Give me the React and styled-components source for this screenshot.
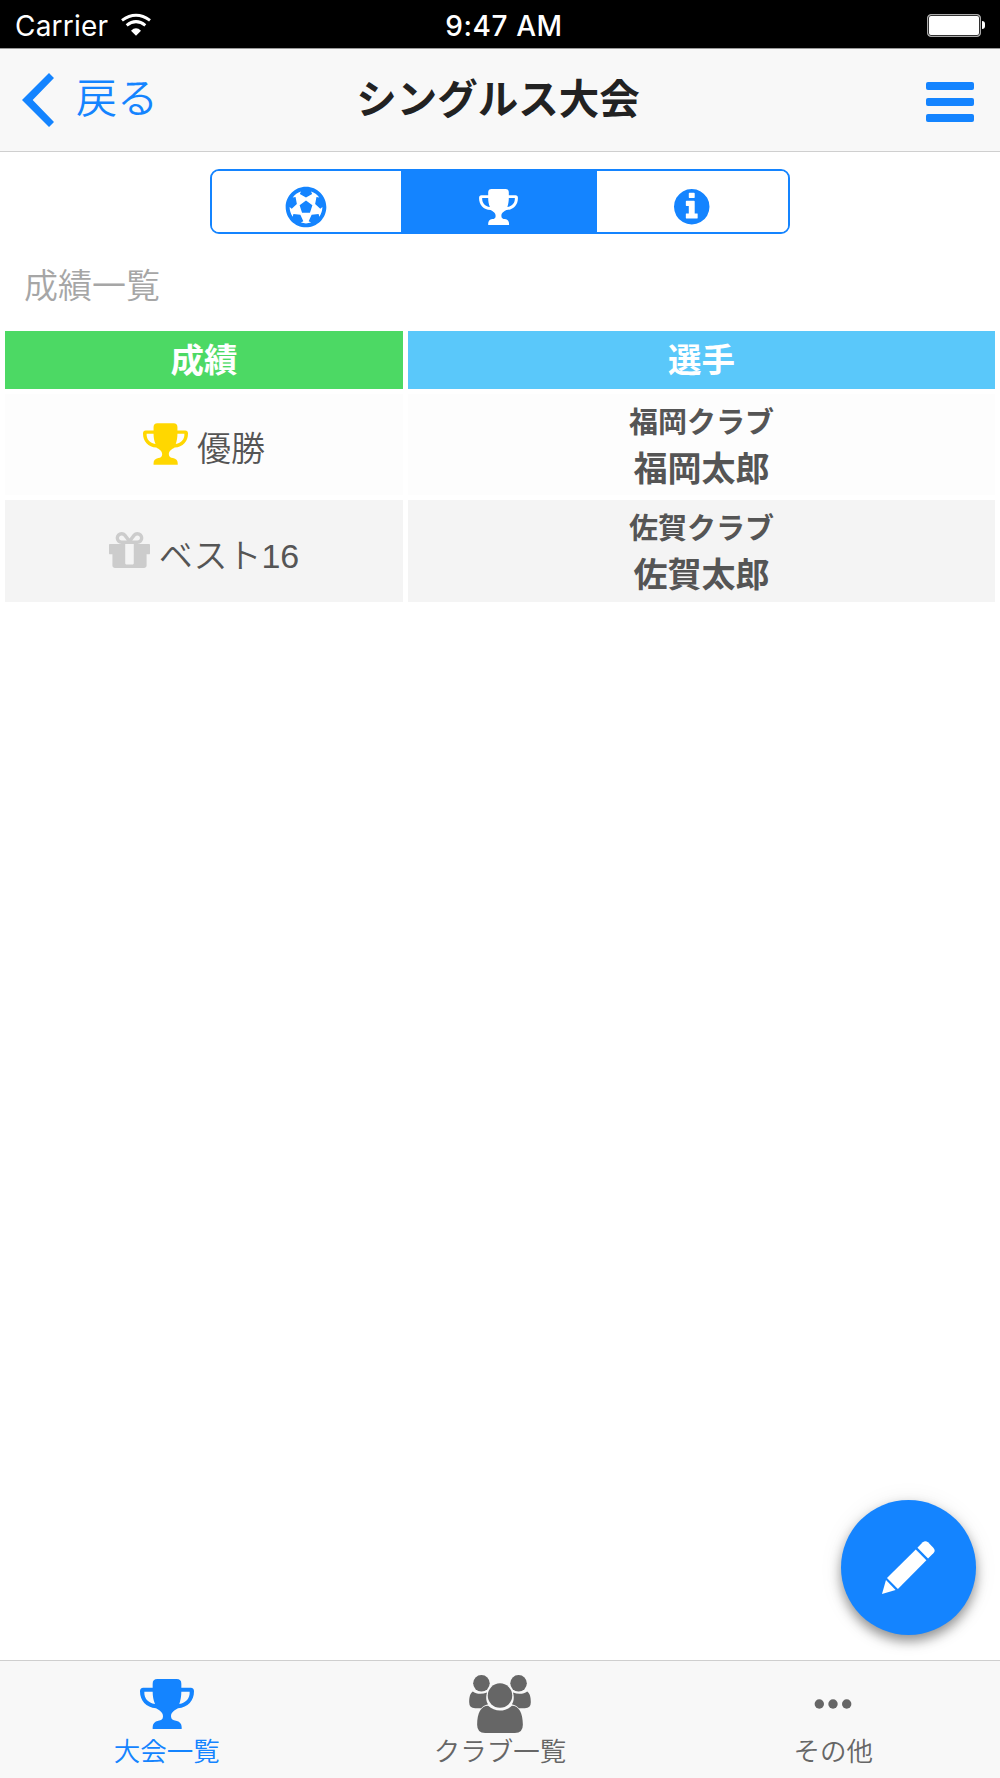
import React from "react";
import styled, { createGlobalStyle } from "styled-components";
import { FaFutbol } from "react-icons/fa";

const TrophyIcon = (props) => (
  <svg viewBox="0 0 162 150" fill="currentColor" {...props}>
    <path
      fillRule="evenodd"
      d="M52 0H110Q124 0 124 14V26H152Q162 26 162 37C162 66 144 85 114 88C104 94 93 100 93 112C93 121 99 125 108 125C119 127 125 134 125 144V150H38V144C38 134 44 127 55 125C64 125 69 121 69 112C69 100 58 94 48 88C18 85 0 66 0 37Q0 26 10 26H38V14Q38 0 52 0ZM13 38C12 58 24 71 45 75C40 63 38 50 38 38ZM124 38C124 50 122 63 118 75C138 71 150 58 149 38Z"
    />
  </svg>
);

const InfoIcon = (props) => (
  <svg viewBox="128 128 1536 1536" fill="currentColor" {...props}>
    <path d="M1152 1376v-160q0-14-9-23t-23-9h-96v-512q0-14-9-23t-23-9h-320q-14 0-23 9t-9 23v160q0 14 9 23t23 9h96v320h-96q-14 0-23 9t-9 23v160q0 14 9 23t23 9h448q14 0 23-9t9-23zm-128-896v-160q0-14-9-23t-23-9h-192q-14 0-23 9t-9 23v160q0 14 9 23t23 9h192q14 0 23-9t9-23zm640 416q0 209-103 385.5t-279.500 279.500-385.500 103-385.500-103-279.500-279.500-103-385.500 103-385.500 279.500-279.500 385.500-103 385.500 103 279.500 279.500 103 385.500z" />
  </svg>
);

const GiftIcon = (props) => (
  <svg viewBox="128 192 1536 1344" fill="currentColor" {...props}>
    <path d="M1056 1356v-716h-320v716q0 25 18 38.500t46 13.500h192q28 0 46-13.500t18-38.500zm-456-844h195l-126-161q-26-31-69-31-40 0-68 28t-28 68 28 68 68 28zm688-96q0-40-28-68t-68-28q-43 0-69 31l-125 161h194q40 0 68-28t28-68zm376 256v320q0 14-9 23t-23 9h-96v416q0 40-28 68t-68 28h-1088q-40 0-68-28t-28-68v-416h-96q-14 0-23-9t-9-23v-320q0-14 9-23t23-9h440q-93 0-158.500-65.500t-65.500-158.500 65.500-158.500 158.500-65.500q107 0 168 77l128 165 128-165q61-77 168-77 93 0 158.500 65.500t65.500 158.500-65.500 158.500-158.500 65.500h440q14 0 23 9t9 23z" />
  </svg>
);

const PeopleIcon = (props) => (
  <svg viewBox="0 0 186 175" fill="currentColor" {...props}>
    <circle cx="37" cy="25" r="25" />
    <circle cx="149" cy="25" r="25" />
    <path d="M11 50C21 58 38 59 54 53C49 68 52 82 57 88C48 90 41 95 36 100H18Q0 100 0 82C0 67 3 55 11 50Z" />
    <path d="M175 50C165 58 148 59 132 53C137 68 134 82 129 88C138 90 145 95 150 100H168Q186 100 186 82C186 67 183 55 175 50Z" />
    <circle cx="93" cy="62" r="37" />
    <path d="M57 93C77 112 109 112 129 93C150 93 162 115 162 150Q162 175 138 175H48Q24 175 24 150C24 115 36 93 57 93Z" />
  </svg>
);

const PencilIcon = (props) => (
  <svg viewBox="0 0 160 160" fill="currentColor" {...props}>
    <path d="M102 26L134 58L48 145L15 112Z" />
    <path d="M107 20L123 4Q131 -3 139 4L155 20Q163 29 155 37L139 53Z" />
    <path d="M12 118L41 148L0 160Z" />
  </svg>
);

const WifiIcon = (props) => (
  <svg viewBox="0 0 90 66" fill="none" stroke="currentColor" {...props}>
    <path d="M3 19Q45 -12 87 19" strokeWidth="9" />
    <path d="M17 34Q45 12 73 34" strokeWidth="9" />
    <path d="M45 65L30 50Q45 36 60 50Z" fill="currentColor" stroke="none" />
  </svg>
);

const BackIcon = (props) => (
  <svg viewBox="0 0 96 162" fill="currentColor" {...props}>
    <path d="M0 81L81 0L96 15L32 81L96 147L81 162Z" />
  </svg>
);

const DotsIcon = (props) => (
  <svg viewBox="0 0 38 10" fill="currentColor" {...props}>
    <circle cx="5.300" cy="5" r="4.700" />
    <circle cx="19" cy="5" r="4.700" />
    <circle cx="32.700" cy="5" r="4.700" />
  </svg>
);

const results = [
  {
    label: "優勝",
    club: "福岡クラブ",
    player: "福岡太郎",
    icon: <TrophyIcon width="45" height="42" />,
    color: "#ffd700",
  },
  {
    label: "ベスト16",
    club: "佐賀クラブ",
    player: "佐賀太郎",
    icon: <GiftIcon width="41" height="36" />,
    color: "#cccccc",
  },
];

export default function App() {
  return (
    <Screen>
      <GlobalStyle />
      <StatusBar>
        <Carrier>
          <span>Carrier</span>
          <WifiIcon width="30" height="22" />
        </Carrier>
        <Clock>9:47 AM</Clock>
        <Battery>
          <BatteryBody />
          <BatteryCap />
        </Battery>
      </StatusBar>
      <NavBar>
        <BackButton>
          <BackIcon width="32" height="54" />
          <span>戻る</span>
        </BackButton>
        <Title>シングルス大会</Title>
        <MenuButton aria-label="menu">
          <i />
          <i />
          <i />
        </MenuButton>
      </NavBar>
      <Content>
        <Segment>
          <SegmentButton>
            <FaFutbol size={42} />
          </SegmentButton>
          <SegmentButton $active>
            <TrophyIcon width="39" height="36" />
          </SegmentButton>
          <SegmentButton>
            <InfoIcon width="35.500" height="35.500" />
          </SegmentButton>
        </Segment>
        <ListHeader>成績一覧</ListHeader>
        <Table>
          <HeadCell $color="#4cd964">成績</HeadCell>
          <HeadCell $color="#5ac8fa">選手</HeadCell>
          {results.map((result, index) => (
            <React.Fragment key={result.label}>
              <RankCell $odd={index % 2 === 1}>
                <RankIcon $color={result.color}>{result.icon}</RankIcon>
                <RankLabel>{result.label}</RankLabel>
              </RankCell>
              <PlayerCell $odd={index % 2 === 1}>
                <span className="club">{result.club}</span>
                <span className="player">{result.player}</span>
              </PlayerCell>
            </React.Fragment>
          ))}
        </Table>
      </Content>
      <EditButton aria-label="edit">
        <PencilIcon width="53" height="53" />
      </EditButton>
      <TabBar>
        <Tab $active>
          <TabIcon>
            <TrophyIcon width="54" height="50" />
          </TabIcon>
          <span>大会一覧</span>
        </Tab>
        <Tab>
          <TabIcon>
            <PeopleIcon width="62" height="58" />
          </TabIcon>
          <span>クラブ一覧</span>
        </Tab>
        <Tab>
          <TabIcon>
            <DotsIcon width="38" height="10" />
          </TabIcon>
          <span>その他</span>
        </Tab>
      </TabBar>
    </Screen>
  );
}

const GlobalStyle = createGlobalStyle`
  * {
    box-sizing: border-box;
  }

  body {
    margin: 0;
    background: #fff;
    font-family: "Liberation Sans", "Noto Sans CJK JP", sans-serif;
  }

  button {
    margin: 0;
    padding: 0;
    border: 0;
    background: none;
    font: inherit;
  }

  svg {
    display: block;
    flex: none;
    overflow: visible;
  }
`;

const Screen = styled.div`
  position: relative;
  display: flex;
  flex-direction: column;
  width: 1000px;
  height: 1778px;
  background: #fff;
  overflow: hidden;
`;

const StatusBar = styled.div`
  display: grid;
  grid-template-columns: 1fr auto 1fr;
  align-items: center;
  height: 49px;
  padding: 0 15px;
  border-bottom: 1px solid #999;
  background: #000;
  color: #fff;
  font-family: Inter, sans-serif;
  font-size: 28px;
  line-height: 48px;
`;

const Carrier = styled.div`
  display: flex;
  align-items: center;
  gap: 13px;
  letter-spacing: 0.2px;

  span {
    padding-top: 2px;
  }
`;

const Clock = styled.div`
  padding: 2px 0 0 8px;
  font-weight: 500;
  letter-spacing: 0.6px;
`;

const Battery = styled.div`
  display: flex;
  align-items: center;
  justify-content: flex-end;
  gap: 1px;
`;

const BatteryBody = styled.div`
  width: 54px;
  height: 23px;
  border: 1px solid #aaa;
  border-radius: 4px;
  background: #fff;
  box-shadow: inset 0 0 0 1px #333;
`;

const BatteryCap = styled.div`
  width: 3px;
  height: 8px;
  border-radius: 0 4px 4px 0;
  background: #fff;
`;

const NavBar = styled.div`
  display: grid;
  grid-template-columns: 1fr auto 1fr;
  align-items: center;
  height: 103px;
  padding: 0 26px 0 22px;
  border-bottom: 1px solid #cfcfcf;
  background: #f8f8f8;
`;

const BackButton = styled.button`
  display: flex;
  align-items: center;
  gap: 22px;
  color: #1484ff;
  font-size: 41px;
  font-weight: 350;
  line-height: 60px;

  span {
    padding-bottom: 3px;
  }
`;

const Title = styled.h1`
  margin: 0;
  padding-bottom: 1px;
  color: #222;
  font-size: 40.500px;
  font-weight: 700;
  line-height: 60px;
`;

const MenuButton = styled.button`
  display: grid;
  gap: 8px;
  justify-self: end;
  width: 48px;
  padding-top: 4px;

  i {
    height: 8px;
    border-radius: 2px;
    background: #1484ff;
  }
`;

const Content = styled.div`
  flex: 1;
  display: flex;
  flex-direction: column;
  padding: 17px 5px 0;
`;

const Segment = styled.div`
  display: grid;
  grid-template-columns: 189px 196px 1fr;
  align-self: center;
  width: 580px;
  height: 65px;
  border: 2px solid #1484ff;
  border-radius: 9px;
  overflow: hidden;
`;

const SegmentButton = styled.button`
  display: flex;
  align-items: center;
  justify-content: center;
  padding: 10px 1px 0 0;
  background: ${({ $active }) => ($active ? "#1484ff" : "#fff")};
  color: ${({ $active }) => ($active ? "#fff" : "#1484ff")};
`;

const ListHeader = styled.h2`
  margin: 28px 0 20px;
  padding-left: 19px;
  color: #a6a6a6;
  font-size: 34px;
  font-weight: 350;
  line-height: 49px;
`;

const Table = styled.div`
  display: grid;
  grid-template-columns: 398px 1fr;
  grid-template-rows: 58px 101px 102px;
  gap: 5px;
`;

const HeadCell = styled.div`
  background: ${({ $color }) => $color};
  color: #fff;
  font-size: 33.500px;
  font-weight: 700;
  line-height: 60px;
  text-align: center;
`;

const RankCell = styled.div`
  display: flex;
  align-items: center;
  justify-content: center;
  gap: 9px;
  background: ${({ $odd }) => ($odd ? "#f4f4f4" : "#fdfdfd")};
`;

const RankIcon = styled.span`
  padding-bottom: 2px;
  color: ${({ $color }) => $color};
`;

const RankLabel = styled.span`
  padding-top: 9px;
  color: #555;
  font-size: 34px;
  font-weight: 350;
  line-height: 50px;
`;

const PlayerCell = styled.div`
  display: flex;
  flex-direction: column;
  align-items: center;
  padding-top: 7px;
  background: ${({ $odd }) => ($odd ? "#f4f4f4" : "#fdfdfd")};
  color: #555;
  font-weight: 700;

  .club {
    font-size: 29px;
    line-height: 44px;
  }

  .player {
    font-size: 34px;
    line-height: 48px;
  }
`;

const EditButton = styled.button`
  position: absolute;
  right: 24.500px;
  bottom: 143px;
  display: flex;
  align-items: center;
  justify-content: center;
  width: 135px;
  height: 135px;
  border-radius: 50%;
  background: #1484ff;
  box-shadow: 0 6px 12px rgba(0, 0, 0, 0.4), 0 2px 24px rgba(0, 0, 0, 0.08);
  color: #fff;
`;

const TabBar = styled.div`
  display: grid;
  grid-template-columns: repeat(3, 1fr);
  height: 118px;
  border-top: 1px solid #cfcfcf;
  background: #f8f8f8;
`;

const Tab = styled.button`
  display: flex;
  flex-direction: column;
  align-items: center;
  padding-top: 13px;
  color: ${({ $active }) => ($active ? "#1484ff" : "#666")};
  font-size: 26.500px;
  font-weight: 350;
  line-height: 37px;
`;

const TabIcon = styled.div`
  display: flex;
  align-items: center;
  justify-content: center;
  height: 60px;
`;
